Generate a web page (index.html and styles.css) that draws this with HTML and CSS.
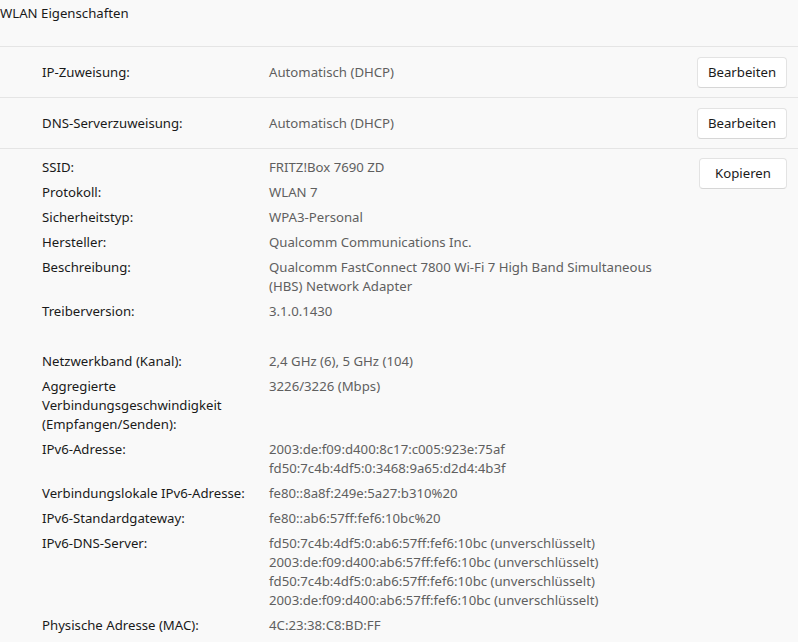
FILE: index.html
```html
<!DOCTYPE html>
<html lang="de">
<head>
<meta charset="utf-8">
<title>WLAN Eigenschaften</title>
<link rel="stylesheet" href="styles.css">
</head>
<body>
<div class="page">
  <div class="title">WLAN Eigenschaften</div>

  <div class="section">
    <div class="grid">
      <div class="label">IP-Zuweisung:</div>
      <div class="value">Automatisch (DHCP)</div>
    </div>
    <button class="btn btn-wide">Bearbeiten</button>
  </div>

  <div class="section">
    <div class="grid">
      <div class="label">DNS-Serverzuweisung:</div>
      <div class="value">Automatisch (DHCP)</div>
    </div>
    <button class="btn btn-wide">Bearbeiten</button>
  </div>

  <div class="section section-details">
    <div class="grid">
      <div class="label">SSID:</div>
      <div class="value">FRITZ!Box 7690 ZD</div>
      <div class="label">Protokoll:</div>
      <div class="value">WLAN 7</div>
      <div class="label">Sicherheitstyp:</div>
      <div class="value">WPA3-Personal</div>
      <div class="label">Hersteller:</div>
      <div class="value">Qualcomm Communications Inc.</div>
      <div class="label">Beschreibung:</div>
      <div class="value">Qualcomm FastConnect 7800 Wi-Fi 7 High Band Simultaneous (HBS) Network Adapter</div>
      <div class="label">Treiberversion:</div>
      <div class="value">3.1.0.1430</div>
      <div class="spacer"></div>
      <div class="label">Netzwerkband (Kanal):</div>
      <div class="value">2,4 GHz (6), 5 GHz (104)</div>
      <div class="label">Aggregierte Verbindungsgeschwindigkeit (Empfangen/Senden):</div>
      <div class="value">3226/3226 (Mbps)</div>
      <div class="label">IPv6-Adresse:</div>
      <div class="value">2003:de:f09:d400:8c17:c005:923e:75af<br>fd50:7c4b:4df5:0:3468:9a65:d2d4:4b3f</div>
      <div class="label">Verbindungslokale IPv6-Adresse:</div>
      <div class="value">fe80::8a8f:249e:5a27:b310%20</div>
      <div class="label">IPv6-Standardgateway:</div>
      <div class="value">fe80::ab6:57ff:fef6:10bc%20</div>
      <div class="label">IPv6-DNS-Server:</div>
      <div class="value">fd50:7c4b:4df5:0:ab6:57ff:fef6:10bc (unverschlüsselt)<br>2003:de:f09:d400:ab6:57ff:fef6:10bc (unverschlüsselt)<br>fd50:7c4b:4df5:0:ab6:57ff:fef6:10bc (unverschlüsselt)<br>2003:de:f09:d400:ab6:57ff:fef6:10bc (unverschlüsselt)</div>
      <div class="label">Physische Adresse (MAC):</div>
      <div class="value">4C:23:38:C8:BD:FF</div>
    </div>
    <button class="btn btn-narrow">Kopieren</button>
  </div>
</div>
</body>
</html>
```

FILE: styles.css
```css
html, body {
  margin: 0;
  padding: 0;
  background: #f9f9f9;
}

body {
  font-family: "Segoe UI", "Noto Sans", "Liberation Sans", sans-serif;
  font-size: 13.2px;
  line-height: 19px;
  color: #1a1a1a;
  overflow: hidden;
}

.page {
  width: 798px;
}

.title {
  height: 42px;
  padding-top: 4px;
  border-bottom: 1px solid #e5e5e5;
}

.section {
  display: flex;
  align-items: center;
  justify-content: space-between;
  height: 50px;
  padding: 0 11px 0 42px;
  border-bottom: 1px solid #e5e5e5;
}

.section-details {
  height: auto;
  align-items: flex-start;
  padding-top: 9px;
  border-bottom: none;
}

.grid {
  display: grid;
  grid-template-columns: 227px 400px;
  row-gap: 6px;
}

.label {
  color: #1a1a1a;
  padding-right: 8px;
}

.value {
  color: #5f5f5f;
}

.spacer {
  grid-column: 1 / -1;
  height: 19px;
}

.btn {
  font-family: inherit;
  font-size: 13.2px;
  color: #1a1a1a;
  background: #ffffff;
  border: 1px solid #e3e3e3;
  border-bottom-color: #d6d6d6;
  border-radius: 4px;
  height: 31px;
  padding: 0 0 1px;
  flex: none;
}

.btn-wide {
  width: 90px;
}

.btn-narrow {
  width: 88px;
}
```
